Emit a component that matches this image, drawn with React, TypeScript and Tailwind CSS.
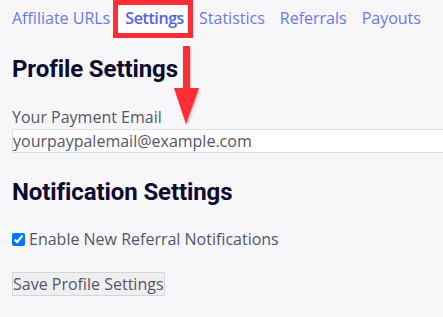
export default function App() {
  const links = ["Affiliate URLs", "Settings", "Statistics", "Referrals", "Payouts"];

  return (
    <div className="relative min-h-screen w-full overflow-hidden bg-[#f7f7fa] pl-3 font-['Open_Sans',sans-serif] text-base text-[#55556a]">
      {/* nav */}
      <nav className="flex gap-[15px] pt-[6px] leading-6">
        {links.map((l) => (
          <a
            key={l}
            href="#"
            className={
              l === "Settings"
                ? "relative z-10 font-semibold tracking-[-0.4px] text-[#4f63ea]"
                : "text-[#6a78f2]"
            }
          >
            {l}
          </a>
        ))}
      </nav>

      {/* annotation box around the active tab */}
      <div className="absolute left-[113px] top-0 h-[38px] w-[80px] border-[5px] border-[#ff2d35] bg-white" />

      {/* annotation arrow */}
      <svg
        className="absolute left-[170px] top-[44px] drop-shadow-[1px_2px_1px_rgba(0,0,0,0.25)]"
        width="34"
        height="84"
        viewBox="0 0 34 84"
      >
        <rect x="13" y="2" width="7" height="44" fill="#ff2d35" />
        <polygon points="4,44 29,44 16,80" fill="#ff2d35" />
      </svg>

      <h2 className="mt-[23px] font-['Roboto',sans-serif] text-2xl leading-8 font-bold tracking-[-0.1px] text-[#0c0a2e]">
        Profile Settings
      </h2>

      <label className="mt-5 block leading-6">Your Payment Email</label>
      <input
        type="text"
        defaultValue="yourpaypalemail@example.com"
        className="block h-6 w-[520px] border border-[#dedee3] bg-white px-0 text-base text-[#55556a] outline-none"
      />

      <h2 className="mt-[23px] font-['Roboto',sans-serif] text-2xl leading-8 font-bold tracking-[-0.1px] text-[#0c0a2e]">
        Notification Settings
      </h2>

      <label className="mt-[19px] flex items-center leading-6">
        <input type="checkbox" defaultChecked className="mr-1 h-[13px] w-[13px]" />
        Enable New Referral Notifications
      </label>

      <button className="mt-[21px] block h-6 border border-[#d6d6da] bg-[#efeff1] px-0 leading-5 text-[#55556a]">
        Save Profile Settings
      </button>
    </div>
  );
}
